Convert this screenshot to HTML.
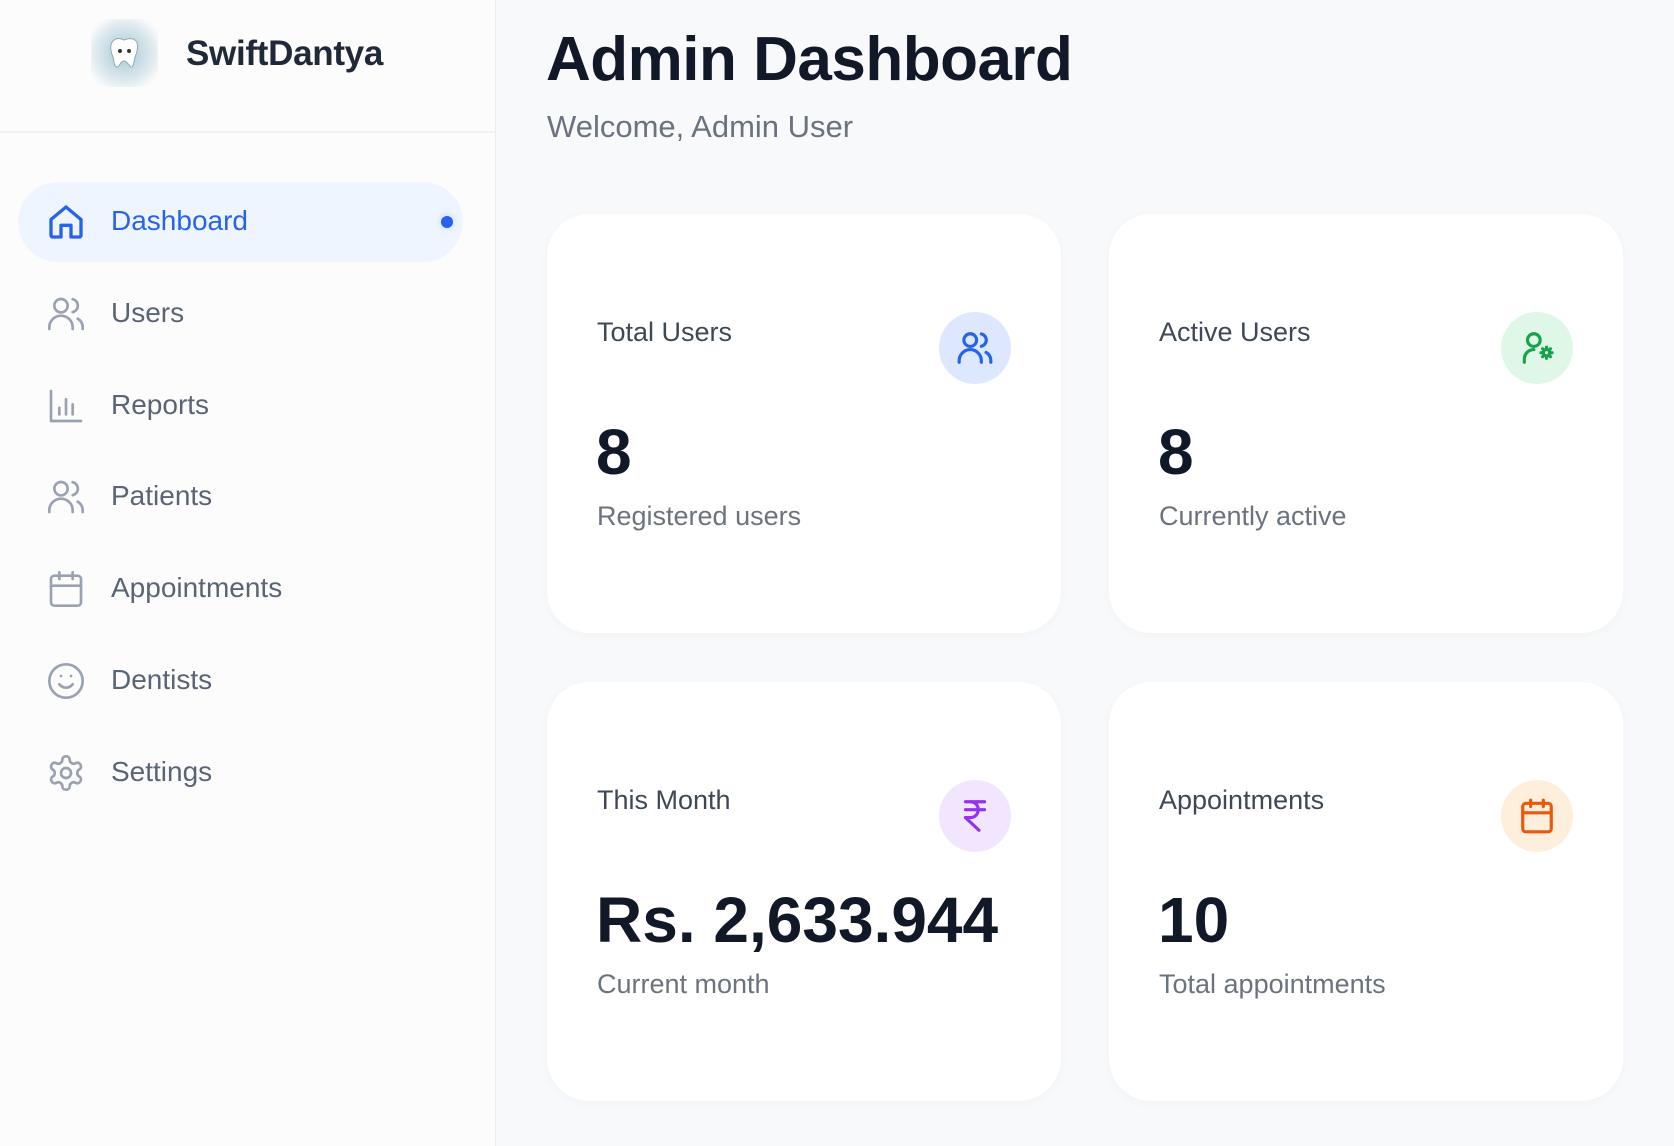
<!DOCTYPE html>
<html><head><meta charset="utf-8"><style>
*{box-sizing:border-box;margin:0;padding:0}
body{width:1674px;height:1146px;overflow:hidden;background:#f8f9fb;font-family:"Liberation Sans",sans-serif;position:relative}
.side{position:absolute;left:0;top:0;width:496px;height:1146px;background:#fcfcfd;border-right:1px solid #eceef2}
.hdr{position:absolute;left:0;top:0;width:495px;height:133px;border-bottom:2px solid #f0f2f5}
.logo{position:absolute;left:91px;top:19px;width:67px;height:68px;background:radial-gradient(circle,#b8d4de 20%,#dfeaee 60%,#fcfcfd 85%)}
.brand{position:absolute;left:186px;top:34px;font-size:35px;font-weight:bold;color:#1f2937;letter-spacing:-0.3px}
.nav{position:absolute;left:18px;width:445px;height:80px;display:flex;align-items:center;font-size:28px;color:#5b6474}
.nav svg{position:absolute;left:28px;width:40px;height:40px;fill:none;stroke:#9aa2b1;stroke-width:1.6;stroke-linecap:round;stroke-linejoin:round}
.nav span{position:absolute;left:93px;top:23px}
.active{background:#eff5ff;border-radius:40px;color:#2563eb}
.active svg{stroke:#2563eb;stroke-width:2}
.dot{position:absolute;left:423px;width:12px;height:12px;border-radius:50%;background:#2563eb;box-shadow:0 0 8px #bcd0ff}
h1{position:absolute;left:546px;top:24px;font-size:62px;font-weight:bold;color:#111827;letter-spacing:-0.5px}
.sub{position:absolute;left:547px;top:109px;font-size:31px;color:#6b7280}
.card{position:absolute;width:514px;height:419px;background:#fff;border-radius:42px;box-shadow:0 2px 10px rgba(0,0,0,.03)}
.lab{position:absolute;left:50px;top:103px;font-size:27px;color:#3f4856}
.ic{position:absolute;left:392px;top:98px;width:72px;height:72px;border-radius:50%;display:flex;align-items:center;justify-content:center}
.ic svg{width:38px;height:38px;fill:none;stroke-width:2;stroke-linecap:round;stroke-linejoin:round}
.num{position:absolute;left:49px;top:201px;font-size:64px;font-weight:bold;color:#111827}
.desc{position:absolute;left:50px;top:287px;font-size:27px;color:#6b7280}
</style></head><body>
<div class="side">
<div class="hdr"><div class="logo"><svg width="67" height="68" viewBox="0 0 67 68"><path d="M22 22c4-4 9-2 11-1 3-1 8-3 12 1 3 4 1 12-1 16-1 4-1 10-4 10-2 0-3-6-7-6s-4 6-7 6c-3 0-3-6-4-10-2-4-4-12 0-16z" fill="#fff" stroke="#8fa9b3" stroke-width="1"/><circle cx="29" cy="32" r="2" fill="#333"/><circle cx="38" cy="32" r="2" fill="#333"/></svg></div><div class="brand">SwiftDantya</div></div>
<div class="nav active" style="top:182px"><svg viewBox="0 0 24 24"><path d="M3 10.5L12 3l9 7.5V20a1 1 0 0 1-1 1h-5v-7H9v7H4a1 1 0 0 1-1-1z"/></svg><span>Dashboard</span><div class="dot"></div></div>
<div class="nav" style="top:274px"><svg viewBox="0 0 24 24"><circle cx="9" cy="7" r="4"/><path d="M2 21v-1a7 7 0 0 1 14 0v1M16 3.1a4 4 0 0 1 0 7.8M22 21v-1a6 6 0 0 0-3-5.2"/></svg><span>Users</span></div>
<div class="nav" style="top:366px"><svg viewBox="0 0 24 24"><path d="M3 3v18h18M8 17v-4M12 17V8M16 17v-6"/></svg><span>Reports</span></div>
<div class="nav" style="top:457px"><svg viewBox="0 0 24 24"><circle cx="9" cy="7" r="4"/><path d="M2 21v-1a7 7 0 0 1 14 0v1M16 3.1a4 4 0 0 1 0 7.8M22 21v-1a6 6 0 0 0-3-5.2"/></svg><span>Patients</span></div>
<div class="nav" style="top:549px"><svg viewBox="0 0 24 24"><rect x="3" y="4" width="18" height="18" rx="2"/><path d="M16 2v4M8 2v4M3 10h18"/></svg><span>Appointments</span></div>
<div class="nav" style="top:641px"><svg viewBox="0 0 24 24"><circle cx="12" cy="12" r="10"/><path d="M8 14s1.5 2 4 2 4-2 4-2M9 9h.01M15 9h.01"/></svg><span>Dentists</span></div>
<div class="nav" style="top:733px"><svg viewBox="0 0 24 24"><path d="M12.2 2h-.4a2 2 0 0 0-2 2v.2a2 2 0 0 1-1 1.7l-.4.3a2 2 0 0 1-2 0l-.2-.1a2 2 0 0 0-2.7.7l-.2.4a2 2 0 0 0 .7 2.7l.2.1a2 2 0 0 1 1 1.7v.5a2 2 0 0 1-1 1.8l-.2.1a2 2 0 0 0-.7 2.7l.2.4a2 2 0 0 0 2.7.7l.2-.1a2 2 0 0 1 2 0l.4.3a2 2 0 0 1 1 1.7v.2a2 2 0 0 0 2 2h.4a2 2 0 0 0 2-2v-.2a2 2 0 0 1 1-1.7l.4-.3a2 2 0 0 1 2 0l.2.1a2 2 0 0 0 2.7-.7l.2-.4a2 2 0 0 0-.7-2.7l-.2-.1a2 2 0 0 1-1-1.8v-.5a2 2 0 0 1 1-1.7l.2-.1a2 2 0 0 0 .7-2.7l-.2-.4a2 2 0 0 0-2.7-.7l-.2.1a2 2 0 0 1-2 0l-.4-.3a2 2 0 0 1-1-1.7V4a2 2 0 0 0-2-2z"/><circle cx="12" cy="12" r="3"/></svg><span>Settings</span></div>
</div>
<h1>Admin Dashboard</h1>
<div class="sub">Welcome, Admin User</div>
<div class="card" style="left:547px;top:214px"><div class="lab">Total Users</div><div class="ic" style="background:#dde8fe"><svg viewBox="0 0 24 24" stroke="#2563eb"><circle cx="9" cy="7" r="4"/><path d="M2 21v-1a7 7 0 0 1 14 0v1M16 3.1a4 4 0 0 1 0 7.8M22 21v-1a6 6 0 0 0-3-5.2"/></svg></div><div class="num">8</div><div class="desc">Registered users</div></div>
<div class="card" style="left:1109px;top:214px"><div class="lab">Active Users</div><div class="ic" style="background:#dff7e6"><svg viewBox="0 0 24 24" stroke="#16a34a"><circle cx="10" cy="7" r="4"/><path d="M4 21v-2a6 6 0 0 1 6-6"/><circle cx="18" cy="15" r="2"/><path d="M18 11.5v1.5M18 17v1.5M14.5 15H16M20 15h1.5M15.5 12.5l1 1M19.5 16.5l1 1M15.5 17.5l1-1M19.5 13.5l1-1"/></svg></div><div class="num">8</div><div class="desc">Currently active</div></div>
<div class="card" style="left:547px;top:682px"><div class="lab">This Month</div><div class="ic" style="background:#f1e6fd"><svg viewBox="0 0 24 24" stroke="#9333ea"><path d="M6 3h12M6 8h12M6 13l8.5 8M6 13h3c6.7 0 6.7-10 0-10"/></svg></div><div class="num" style="letter-spacing:0px">Rs. 2,633.944</div><div class="desc">Current month</div></div>
<div class="card" style="left:1109px;top:682px"><div class="lab">Appointments</div><div class="ic" style="background:#fdefdc"><svg viewBox="0 0 24 24" stroke="#ea580c"><rect x="3" y="4" width="18" height="18" rx="2"/><path d="M16 2v4M8 2v4M3 10h18"/></svg></div><div class="num">10</div><div class="desc">Total appointments</div></div>
</body></html>
